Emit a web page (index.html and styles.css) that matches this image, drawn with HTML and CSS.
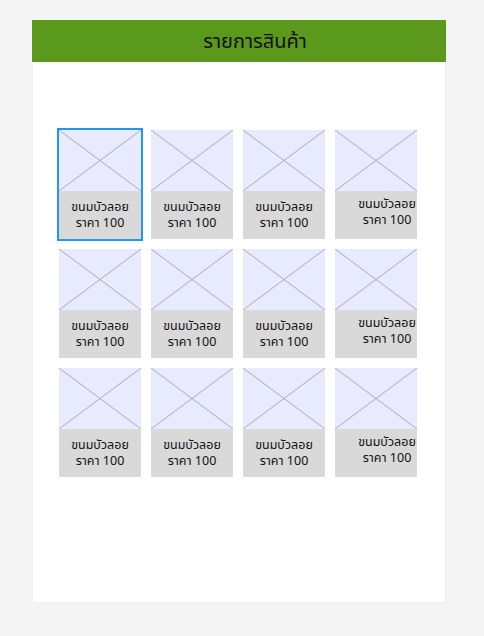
FILE: index.html
```html
<!DOCTYPE html>
<html lang="th">
<head>
<meta charset="utf-8">
<title>รายการสินค้า</title>
<link rel="stylesheet" href="styles.css">
</head>
<body>
<div class="panel">
  <div class="header"><span class="title">รายการสินค้า</span></div>
  <div class="grid">
    <div class="card selected"><svg class="ph" viewBox="0 0 100 100" preserveAspectRatio="none"><line x1="0" y1="0" x2="100" y2="100"/><line x1="100" y1="0" x2="0" y2="100"/></svg><div class="cap"><p>ขนมบัวลอย</p><p>ราคา 100</p></div></div>
    <div class="card"><svg class="ph" viewBox="0 0 100 100" preserveAspectRatio="none"><line x1="0" y1="0" x2="100" y2="100"/><line x1="100" y1="0" x2="0" y2="100"/></svg><div class="cap"><p>ขนมบัวลอย</p><p>ราคา 100</p></div></div>
    <div class="card"><svg class="ph" viewBox="0 0 100 100" preserveAspectRatio="none"><line x1="0" y1="0" x2="100" y2="100"/><line x1="100" y1="0" x2="0" y2="100"/></svg><div class="cap"><p>ขนมบัวลอย</p><p>ราคา 100</p></div></div>
    <div class="card"><svg class="ph" viewBox="0 0 100 100" preserveAspectRatio="none"><line x1="0" y1="0" x2="100" y2="100"/><line x1="100" y1="0" x2="0" y2="100"/></svg><div class="cap cap-off"><p>ขนมบัวลอย</p><p>ราคา 100</p></div></div>

    <div class="card"><svg class="ph" viewBox="0 0 100 100" preserveAspectRatio="none"><line x1="0" y1="0" x2="100" y2="100"/><line x1="100" y1="0" x2="0" y2="100"/></svg><div class="cap"><p>ขนมบัวลอย</p><p>ราคา 100</p></div></div>
    <div class="card"><svg class="ph" viewBox="0 0 100 100" preserveAspectRatio="none"><line x1="0" y1="0" x2="100" y2="100"/><line x1="100" y1="0" x2="0" y2="100"/></svg><div class="cap"><p>ขนมบัวลอย</p><p>ราคา 100</p></div></div>
    <div class="card"><svg class="ph" viewBox="0 0 100 100" preserveAspectRatio="none"><line x1="0" y1="0" x2="100" y2="100"/><line x1="100" y1="0" x2="0" y2="100"/></svg><div class="cap"><p>ขนมบัวลอย</p><p>ราคา 100</p></div></div>
    <div class="card"><svg class="ph" viewBox="0 0 100 100" preserveAspectRatio="none"><line x1="0" y1="0" x2="100" y2="100"/><line x1="100" y1="0" x2="0" y2="100"/></svg><div class="cap cap-off"><p>ขนมบัวลอย</p><p>ราคา 100</p></div></div>

    <div class="card"><svg class="ph" viewBox="0 0 100 100" preserveAspectRatio="none"><line x1="0" y1="0" x2="100" y2="100"/><line x1="100" y1="0" x2="0" y2="100"/></svg><div class="cap"><p>ขนมบัวลอย</p><p>ราคา 100</p></div></div>
    <div class="card"><svg class="ph" viewBox="0 0 100 100" preserveAspectRatio="none"><line x1="0" y1="0" x2="100" y2="100"/><line x1="100" y1="0" x2="0" y2="100"/></svg><div class="cap"><p>ขนมบัวลอย</p><p>ราคา 100</p></div></div>
    <div class="card"><svg class="ph" viewBox="0 0 100 100" preserveAspectRatio="none"><line x1="0" y1="0" x2="100" y2="100"/><line x1="100" y1="0" x2="0" y2="100"/></svg><div class="cap"><p>ขนมบัวลอย</p><p>ราคา 100</p></div></div>
    <div class="card"><svg class="ph" viewBox="0 0 100 100" preserveAspectRatio="none"><line x1="0" y1="0" x2="100" y2="100"/><line x1="100" y1="0" x2="0" y2="100"/></svg><div class="cap cap-off"><p>ขนมบัวลอย</p><p>ราคา 100</p></div></div>
  </div>
</div>
</body>
</html>
```
FILE: styles.css
```css
html, body {
  margin: 0;
  padding: 0;
}
body {
  background: #f4f4f4;
  font-family: "Noto Sans", "Noto Sans Thai", Tahoma, sans-serif;
  color: #000;
  padding-top: 20px;
}
.panel {
  box-sizing: border-box;
  width: 414px;
  height: 583px;
  margin-left: 32px;
  background: #fff;
  border: 1px solid #f0f0f0;
  border-top: none;
}
.header {
  height: 42px;
  background: #5a991c;
  display: flex;
  align-items: center;
  justify-content: center;
  margin: 0 -1px;
  padding-left: 32px;
}
.title {
  font-size: 20px;
  line-height: 24px;
  color: #111;
}
.grid {
  display: grid;
  grid-template-columns: repeat(4, 82px);
  grid-auto-rows: 109px;
  column-gap: 10px;
  row-gap: 10px;
  padding-top: 68px;
  padding-left: 26px;
}
.card {
  display: flex;
  flex-direction: column;
  background: #d9d9d9;
}
.card.selected {
  outline: 2px solid #2196f3;
  outline-offset: 0;
}
.ph {
  display: block;
  width: 82px;
  height: 61px;
  background: #e8ebfd;
  flex: none;
}
.ph line {
  stroke: #8e8e9c;
  stroke-width: 0.7;
  vector-effect: non-scaling-stroke;
}
.cap {
  flex: 1;
  display: flex;
  flex-direction: column;
  align-items: center;
  justify-content: center;
  font-size: 12.5px;
  line-height: 16px;
  color: #111;
}
.cap p {
  margin: 0;
  white-space: nowrap;
}
.cap-off {
  padding-left: 22px;
  padding-bottom: 7px;
}
```
